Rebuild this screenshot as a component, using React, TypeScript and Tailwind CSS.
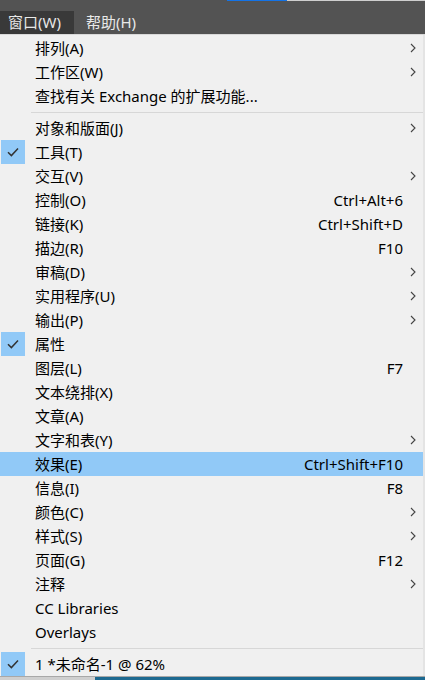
import React from "react";

type Item = {
  label: string;
  shortcut?: string;
  sub?: boolean;
  checked?: boolean;
  active?: boolean;
};

const groupA: Item[] = [
  { label: "排列(A)", sub: true },
  { label: "工作区(W)", sub: true },
  { label: "查找有关 Exchange 的扩展功能..." },
];

const groupB: Item[] = [
  { label: "对象和版面(J)", sub: true },
  { label: "工具(T)", checked: true },
  { label: "交互(V)", sub: true },
  { label: "控制(O)", shortcut: "Ctrl+Alt+6" },
  { label: "链接(K)", shortcut: "Ctrl+Shift+D" },
  { label: "描边(R)", shortcut: "F10" },
  { label: "审稿(D)", sub: true },
  { label: "实用程序(U)", sub: true },
  { label: "输出(P)", sub: true },
  { label: "属性", checked: true },
  { label: "图层(L)", shortcut: "F7" },
  { label: "文本绕排(X)" },
  { label: "文章(A)" },
  { label: "文字和表(Y)", sub: true },
  { label: "效果(E)", shortcut: "Ctrl+Shift+F10", active: true },
  { label: "信息(I)", shortcut: "F8" },
  { label: "颜色(C)", sub: true },
  { label: "样式(S)", sub: true },
  { label: "页面(G)", shortcut: "F12" },
  { label: "注释", sub: true },
  { label: "CC Libraries" },
  { label: "Overlays" },
];

const groupC: Item[] = [{ label: "1 *未命名-1 @ 62%", checked: true }];

function Check() {
  return (
    <svg width="14" height="14" viewBox="0 0 14 14" fill="none">
      <path d="M2 7.2 L5.4 10.6 L12 3.6" stroke="#333" strokeWidth="1.5" />
    </svg>
  );
}

function Chevron() {
  return (
    <svg width="6" height="10" viewBox="0 0 6 10" fill="none">
      <path d="M1 1 L5 5 L1 9" stroke="#444" strokeWidth="1.1" />
    </svg>
  );
}

function Row({ item }: { item: Item }) {
  return (
    <div
      className={`flex h-6 items-center ${item.active ? "bg-[#91c9f7]" : ""}`}
    >
      <div className="flex w-[35px] shrink-0 items-center pl-px">
        {item.checked && (
          <div className="flex h-6 w-6 items-center justify-center bg-[#91c9f7]">
            <Check />
          </div>
        )}
      </div>
      <span className="flex-1 whitespace-nowrap">{item.label}</span>
      <span className="whitespace-nowrap">{item.shortcut}</span>
      <div className="flex w-5 shrink-0 items-center justify-center">
        {item.sub && <Chevron />}
      </div>
    </div>
  );
}

function Separator() {
  return (
    <div className="flex h-2 items-center pl-[31px]">
      <div className="h-px flex-1 bg-[#d7d7d7]" />
    </div>
  );
}

export default function App() {
  return (
    <div
      className="flex h-[680px] w-[425px] flex-col overflow-hidden bg-[#f0f0f0] text-[15px] text-black"
      style={{ fontFamily: '"Noto Sans", "Noto Sans CJK SC", sans-serif' }}
    >
      <header className="flex h-[34px] shrink-0 flex-col bg-[#535353] text-[#e8e8e8]">
        <div className="flex h-[11px]">
          <div className="ml-[227px] h-px w-[60px] bg-[#1473e6]" />
          <div className="h-px flex-1 bg-[#cfcfcf]" />
        </div>
        <nav className="flex flex-1 items-stretch">
          <div className="flex w-[74px] items-center bg-[#393939] pl-2">窗口(W)</div>
          <div className="flex items-center pl-3">帮助(H)</div>
        </nav>
      </header>
      <div className="h-px bg-[#d9d9d9]" />
      <main className="flex flex-1 flex-col border-r-2 border-[#e4e4e4] pt-px">
        {groupA.map((it) => (
          <Row key={it.label} item={it} />
        ))}
        <Separator />
        {groupB.map((it) => (
          <Row key={it.label} item={it} />
        ))}
        <Separator />
        {groupC.map((it) => (
          <Row key={it.label} item={it} />
        ))}
      </main>
      <div className="h-px bg-[#a8a8a8]" />
      <div className="flex h-[3px]">
        <div className="w-[95px] bg-[#cfcfcf]" />
        <div className="flex-1 bg-[#1d6990]" />
      </div>
    </div>
  );
}
